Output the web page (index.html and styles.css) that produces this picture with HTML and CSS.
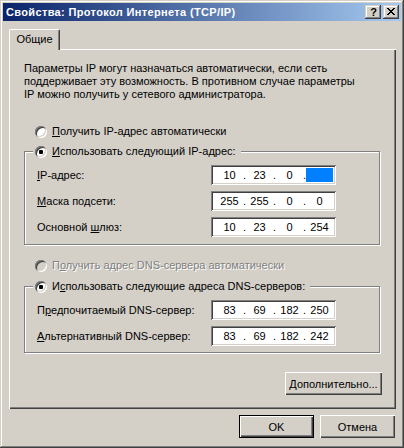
FILE: index.html
```html
<!DOCTYPE html>
<html lang="ru">
<head>
<meta charset="utf-8">
<title>Свойства: Протокол Интернета (TCP/IP)</title>
<link rel="stylesheet" href="styles.css">
</head>
<body>
<div class="window">
  <div class="titlebar">
    <span class="title">Свойства: Протокол Интернета (TCP/IP)</span>
    <div class="caption-btns">
      <span class="cbtn help">?</span>
      <span class="cbtn close">
        <svg width="8" height="7" viewBox="0 0 8 7" shape-rendering="crispEdges">
          <rect x="0" y="0" width="2" height="1"/><rect x="6" y="0" width="2" height="1"/>
          <rect x="1" y="1" width="2" height="1"/><rect x="5" y="1" width="2" height="1"/>
          <rect x="2" y="2" width="4" height="1"/>
          <rect x="3" y="3" width="2" height="1"/>
          <rect x="2" y="4" width="4" height="1"/>
          <rect x="1" y="5" width="2" height="1"/><rect x="5" y="5" width="2" height="1"/>
          <rect x="0" y="6" width="2" height="1"/><rect x="6" y="6" width="2" height="1"/>
        </svg>
      </span>
    </div>
  </div>
  <div class="client">
    <div class="tabstrip"><div class="tab">Общие</div></div>
    <div class="panel">
      <p class="intro">Параметры IP могут назначаться автоматически, если сеть<br>поддерживает эту возможность. В противном случае параметры<br>IP можно получить у сетевого администратора.</p>

      <div class="radio-row first"><span class="radio"></span><span><u>П</u>олучить IP-адрес автоматически</span></div>

      <fieldset class="group">
        <legend class="radio-row"><span class="radio checked"></span><span><u>И</u>спользовать следующий IP-адрес:</span></legend>
        <div class="rows">
          <div class="field-row"><span class="label"><u>I</u>P-адрес:</span>
            <div class="ipbox"><span class="seg">10</span><span class="dot">.</span><span class="seg">23</span><span class="dot">.</span><span class="seg">0</span><span class="dot">.</span><span class="seg sel"></span></div></div>
          <div class="field-row"><span class="label"><u>М</u>аска подсети:</span>
            <div class="ipbox"><span class="seg">255</span><span class="dot">.</span><span class="seg">255</span><span class="dot">.</span><span class="seg">0</span><span class="dot">.</span><span class="seg">0</span></div></div>
          <div class="field-row"><span class="label">Основной <u>ш</u>люз:</span>
            <div class="ipbox"><span class="seg">10</span><span class="dot">.</span><span class="seg">23</span><span class="dot">.</span><span class="seg">0</span><span class="dot">.</span><span class="seg">254</span></div></div>
        </div>
      </fieldset>

      <div class="radio-row dns-auto disabled"><span class="radio off"></span><span>П<u>о</u>лучить адрес DNS-сервера автоматически</span></div>

      <fieldset class="group group-dns">
        <legend class="radio-row"><span class="radio checked"></span><span>И<u>с</u>пользовать следующие адреса DNS-серверов:</span></legend>
        <div class="rows">
          <div class="field-row"><span class="label">П<u>р</u>едпочитаемый DNS-сервер:</span>
            <div class="ipbox"><span class="seg">83</span><span class="dot">.</span><span class="seg">69</span><span class="dot">.</span><span class="seg">182</span><span class="dot">.</span><span class="seg">250</span></div></div>
          <div class="field-row"><span class="label"><u>А</u>льтернативный DNS-сервер:</span>
            <div class="ipbox"><span class="seg">83</span><span class="dot">.</span><span class="seg">69</span><span class="dot">.</span><span class="seg">182</span><span class="dot">.</span><span class="seg">242</span></div></div>
        </div>
      </fieldset>

      <div class="adv-row"><button class="btn adv"><u>Д</u>ополнительно...</button></div>
    </div>
    <div class="footer">
      <button class="btn default">OK</button>
      <button class="btn">Отмена</button>
    </div>
  </div>
</div>
</body>
</html>
```

FILE: styles.css
```css
* { box-sizing: border-box; }
html, body { margin: 0; padding: 0; }
body {
  background: #D4D0C8;
  font-family: "Liberation Sans", Arial, sans-serif;
  font-size: 11px;
  color: #000;
}
u { text-underline-offset: 1px; }

.window {
  width: 404px;
  height: 448px;
  padding: 3px;
  background: #D4D0C8;
  box-shadow: inset -1px -1px #404040, inset 1px 1px #D4D0C8,
              inset -2px -2px #808080, inset 2px 2px #fff;
  display: flex;
  flex-direction: column;
}

.titlebar {
  height: 18px;
  display: flex;
  align-items: center;
  justify-content: space-between;
  background: linear-gradient(to right, #0A246A, #A6CAF0);
  padding: 0 2px 0 3px;
}
.title {
  color: #fff;
  font-weight: bold;
  letter-spacing: 0.35px;
  white-space: nowrap;
}
.caption-btns { display: flex; gap: 2px; }
.cbtn {
  width: 16px;
  height: 14px;
  background: #D4D0C8;
  box-shadow: inset -1px -1px #404040, inset 1px 1px #D4D0C8,
              inset -2px -2px #808080, inset 2px 2px #fff;
  display: flex;
  align-items: center;
  justify-content: center;
}
.help {
  font-weight: bold;
  font-size: 11px;
  line-height: 14px;
  padding-left: 1px;
}
.close svg { display: block; margin: 0 1px 1px 0; }

.client { padding: 8px 5px 0 6px; }

.tabstrip { display: flex; height: 20px; }
.tab {
  position: relative;
  z-index: 1;
  width: 51px;
  height: 21px;
  background: #D4D0C8;
  border-left: 1px solid #fff;
  border-top: 1px solid #fff;
  border-right: 1px solid #404040;
  border-top-left-radius: 2px;
  border-top-right-radius: 2px;
  box-shadow: inset -1px 0 #808080;
  text-align: center;
  line-height: 18px;
}

.panel {
  width: 387px;
  height: 360px;
  padding: 13px 15px 0 15px;
  box-shadow: inset 1px 1px #fff, inset -1px -1px #404040, inset -2px -2px #808080;
}

.intro { margin: 0; line-height: 13px; white-space: nowrap; }

.radio-row {
  display: flex;
  align-items: center;
  height: 13px;
  line-height: 13px;
  gap: 5px;
  white-space: nowrap;
}
.radio-row.first { margin: 24px 0 0 11px; }
.radio-row.dns-auto { margin: 14px 0 0 11px; }
.disabled { color: #808080; text-shadow: 1px 1px #fff; }

.radio {
  flex: none;
  position: relative;
  width: 12px;
  height: 12px;
  border-radius: 50%;
  background: #fff;
  box-shadow: inset 1px 1px #808080, inset -1px -1px #fff,
              inset 2px 2px #404040, inset -2px -2px #D4D0C8;
}
.radio.off { background: #D4D0C8; }
.radio.checked::after {
  content: "";
  position: absolute;
  left: 4px;
  top: 4px;
  width: 4px;
  height: 4px;
  border-radius: 1px;
  background: #000;
}

.group {
  margin: 7px 0 0 0;
  padding: 0 0 7px 0;
  width: 356px;
  min-inline-size: 0;
  border: 1px solid #808080;
  box-shadow: inset 1px 1px #fff, 1px 1px #fff;
}
.group-dns { margin-top: 8px; padding-bottom: 6px; }
.group legend {
  margin-left: 8px;
  padding: 0 5px 0 2px;
  background: #D4D0C8;
}

.rows {
  display: flex;
  flex-direction: column;
  gap: 6px;
  padding: 7px 0 0 12px;
}
.field-row { display: flex; align-items: center; height: 20px; }
.label { width: 174px; white-space: nowrap; }

.ipbox {
  width: 125px;
  height: 20px;
  background: #fff;
  box-shadow: inset 1px 1px #808080, inset -1px -1px #fff,
              inset 2px 2px #404040, inset -2px -2px #D4D0C8;
  display: flex;
  align-items: center;
  padding: 0 2px 0 5px;
}
.seg { width: 27px; height: 14px; line-height: 14px; text-align: center; }
.seg.sel { background: #0080FF; }
.dot { width: 3px; text-align: center; line-height: 14px; }

.adv-row { display: flex; justify-content: flex-end; margin: 19px -1px 0 0; }

.btn {
  font: inherit;
  color: #000;
  width: 75px;
  height: 23px;
  padding: 0;
  border: none;
  background: #D4D0C8;
  box-shadow: inset 1px 1px #fff, inset -1px -1px #404040, inset -2px -2px #808080;
}
.btn.adv { width: 97px; }
.btn.default {
  border: 1px solid #000;
}

.footer {
  display: flex;
  justify-content: flex-end;
  gap: 6px;
  padding: 6px 1px 0 0;
}
```
